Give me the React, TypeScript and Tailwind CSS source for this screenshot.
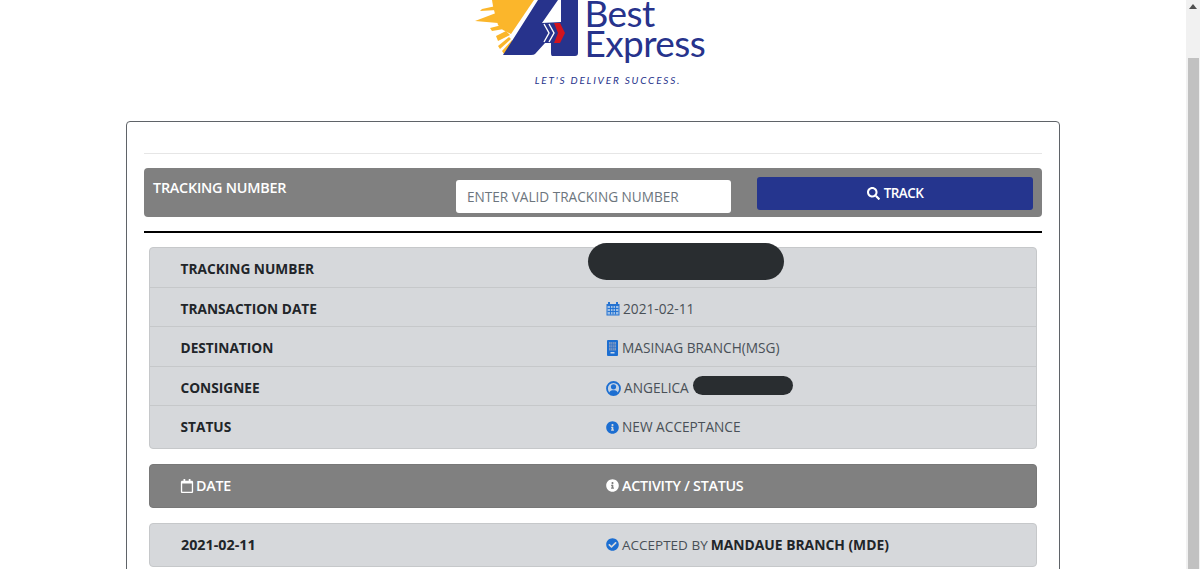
import { FaCheckCircle, FaInfoCircle, FaRegCalendar, FaSearch } from 'react-icons/fa'

const Logo = () => {
    return (
        <div className="flex flex-col items-center">
            <div className="flex h-[66px] items-start">
                <svg width="110" height="60" viewBox="470 0 110 60" className="shrink-0">
                    {/* sun */}
                    <g fill="#fbb62b">
                        <path d="M491 0 L533 0 L510 34 L502 30 L497 25 L494 14 L492 6 Z" />
                        <path d="M474 21 L495 13 L497 23 Z" />
                        <path d="M479 11 L481 9 L495 6 L496 10 Z" />
                        <path d="M489 28 L501 25 L503 29 L491 31 Z" />
                        <path d="M495 36 L505 31 L509 35 L497 41 Z" />
                        <path d="M497 46 L508 37 L510 39 L499 49 Z" />
                        <path d="M501 51 L511 40 L512 42 L503 54 Z" />
                    </g>
                    {/* A */}
                    <path d="M537 0 L557 0 L541 23 L560 22 L560 0 L577 0 L577 53 Q577 56 574 56 L551 56 Q550 56 550 53 L550 43 L544 43 L534 54 Q533 55 530 55 L502 55 Z" fill="#27338c" />
                    <path d="M543 24 L548 33 L543 42" fill="none" stroke="#ffffff" strokeWidth="1.4" />
                    <path d="M548 24 L553 33 L548 42" fill="none" stroke="#ffffff" strokeWidth="1.4" />
                    <path d="M553 23 L559 23 L564 33 L559 43 L553 43 L557 33 Z" fill="#d2141e" />
                </svg>
                <div className="ml-[4px] flex w-[123px] flex-col font-['Lato',sans-serif] text-[37px] font-normal text-[#27338c]">
                    <span className="h-[26px] leading-[26px] tracking-[-0.6px]">Best</span>
                    <span className="mt-[4px] h-[26px] leading-[26px] tracking-[-0.6px]">Express</span>
                </div>
            </div>
            <p className="mt-[7px] ml-[38px] font-['Lato',sans-serif] text-[10px] leading-[14px] tracking-[1.8px] text-[#27338c] italic">LET'S DELIVER SUCCESS.</p>
        </div>
    )
}

const CalendarIcon = () => {
    return (
        <svg width="14" height="15" viewBox="0 0 14 15" className="mr-[3px] shrink-0 text-[#1c6ed1]">
            <path d="M2 1 H4 V3 H10 V1 H12 V3 H13.5 V14.5 H0.5 V3 H2 Z" fill="currentColor" opacity="0.95" />
            <path d="M1.5 5 H12.5 V13.5 H1.5 Z" fill="#9fc0e6" />
            <path d="M1.5 7.5 H12.5 M1.5 10.5 H12.5 M4.5 5 V13.5 M7 5 V13.5 M9.5 5 V13.5" stroke="currentColor" strokeWidth="0.9" fill="none" />
        </svg>
    )
}

const BuildingIcon = () => {
    return (
        <svg width="11" height="16" viewBox="0 0 11 16" className="mr-[4px] ml-[1px] shrink-0 text-[#1c6ed1]">
            <rect width="11" height="16" rx="1" fill="currentColor" />
            <rect x="2" y="2" width="7" height="8.5" fill="#7d9ac4" />
            <path d="M3.8 2 V10.5 M5.5 2 V10.5 M7.2 2 V10.5 M2 4.8 H9 M2 7.6 H9" stroke="#2f6fc4" strokeWidth="0.6" />
            <rect x="3.5" y="12" width="4" height="1.5" fill="#c9d6e8" />
        </svg>
    )
}

const UserIcon = () => {
    return (
        <svg width="15" height="15" viewBox="0 0 15 15" className="mr-[3px] shrink-0 text-[#1c6ed1]">
            <circle cx="7.5" cy="7.5" r="6.5" fill="#c3d2e4" stroke="currentColor" strokeWidth="1.8" />
            <circle cx="7.5" cy="5.8" r="2.6" fill="currentColor" />
            <path d="M3.2 12 C3.8 9.6 5.5 9.2 7.5 9.2 C9.5 9.2 11.2 9.6 11.8 12 C10.6 13.2 9 13.8 7.5 13.8 C6 13.8 4.4 13.2 3.2 12 Z" fill="currentColor" />
        </svg>
    )
}

const InfoRow = ({ label, children, last }: { label: string; children: React.ReactNode; last?: boolean }) => {
    return (
        <div className={last ? "grid h-[41.6px] grid-cols-2 items-center" : "grid h-[39.6px] grid-cols-2 items-center border-b border-[#c6c8ca] pt-[4px]"}>
            <div className="pl-[30.5px] text-[13.7px] font-bold text-[#212529]">{label}</div>
            <div className="flex items-center pl-[13px] text-[13.7px] text-[#495057]">{children}</div>
        </div>
    )
}

export default function App() {
    return (
        <div className="flex h-[569px] overflow-hidden bg-white font-['Open_Sans',sans-serif]">
            <div className="min-w-0 flex-1">
                <header className="flex h-[121px] justify-center pr-[8px]">
                    <Logo />
                </header>

                <main className="mx-[126px] h-[600px] rounded-[4px] border border-[#5f6368] px-[17px]">
                    <hr className="mt-[31px] border-[#e6e6e6]" />

                    <div className="mt-[14px] flex h-[49px] rounded-[4px] bg-[#808080]">
                        <div className="w-[312px] pt-[9px] pl-[9px] text-[14.4px] leading-[22px] font-semibold tracking-[-0.25px] text-white">TRACKING NUMBER</div>
                        <input
                            placeholder="ENTER VALID TRACKING NUMBER"
                            className="mt-[12px] h-[33px] w-[275px] rounded-[3px] bg-white px-[11px] text-[13.6px] text-[#495057] placeholder:text-[#6c757d]"
                        />
                        <button className="mt-[9px] ml-[26px] flex h-[33px] w-[276px] items-center justify-center gap-[4px] rounded-[3px] bg-[#25358e] text-[13.5px] font-semibold tracking-[-0.6px] text-white">
                            <FaSearch className="text-[13px]" /> TRACK
                        </button>
                    </div>

                    <div className="mt-[14px] h-[2px] bg-black" />

                    <section className="relative mx-[5px] mt-[14px] rounded-[4px] border border-[#c6c8ca] bg-[#d6d8db]">
                        <InfoRow label="TRACKING NUMBER"><span /></InfoRow>
                        <InfoRow label="TRANSACTION DATE">
                            <CalendarIcon /> 2021-02-11
                        </InfoRow>
                        <InfoRow label="DESTINATION">
                            <BuildingIcon /> MASINAG BRANCH(MSG)
                        </InfoRow>
                        <InfoRow label="CONSIGNEE">
                            <UserIcon /> ANGELICA
                            <span className="mb-[5px] ml-[4px] h-[19px] w-[100px] rounded-full bg-[#292d30]" />
                        </InfoRow>
                        <InfoRow label="STATUS" last>
                            <FaInfoCircle className="mr-[3px] text-[13px] text-[#1c6ed1]" /> NEW ACCEPTANCE
                        </InfoRow>
                        <div className="absolute top-[-5px] left-[438px] h-[37px] w-[196px] rounded-full bg-[#292d30]" />
                    </section>

                    <section className="mx-[5px] mt-[15px] grid h-[44px] grid-cols-2 items-center rounded-[4px] border border-[#787878] bg-[#808080] text-[14.3px] font-semibold tracking-[-0.25px] text-white">
                        <div className="flex items-center gap-[2px] pl-[30px]"><FaRegCalendar className="text-[14px]" /> DATE</div>
                        <div className="flex items-center gap-[3px] pl-[13px]"><FaInfoCircle className="text-[13px]" /> ACTIVITY / STATUS</div>
                    </section>

                    <section className="mx-[5px] mt-[15px] grid h-[44px] grid-cols-2 items-center rounded-[4px] border border-[#c6c8ca] bg-[#d6d8db] text-[13.5px]">
                        <div className="pl-[31px] text-[14.3px] font-bold text-[#212529]">2021-02-11</div>
                        <div className="flex items-center pl-[13px] text-[#495057]">
                            <FaCheckCircle className="mr-[3px] text-[13px] text-[#1c6ed1]" /> ACCEPTED BY <b className="ml-[3px] text-[13.85px] text-[#212529]">MANDAUE BRANCH (MDE)</b>
                        </div>
                    </section>
                </main>
            </div>

            <div className="flex w-[14px] shrink-0 flex-col items-center bg-[#f1f1f1]">
                <div className="mt-[4px] h-0 w-0 border-x-[4px] border-b-[5px] border-x-transparent border-b-[#505050]" />
                <div className="mt-[49px] ml-[1px] h-[511px] w-[11px] bg-[#c1c1c1]" />
            </div>
        </div>
    )
}
